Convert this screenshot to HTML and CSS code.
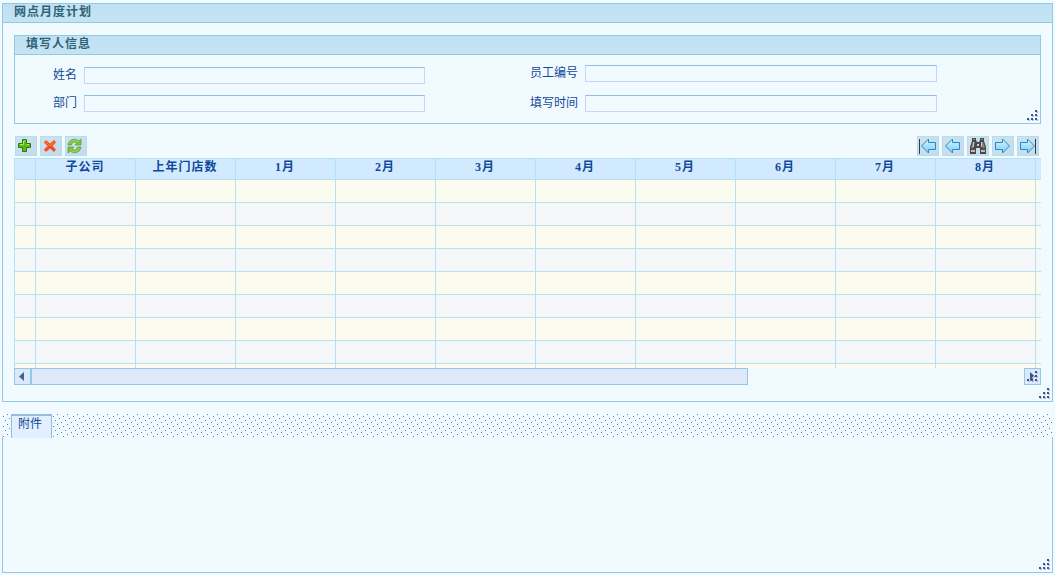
FILE: index.html
```html
<!DOCTYPE html>
<html lang="zh-CN">
<head>
<meta charset="utf-8">
<title>网点月度计划</title>
<link rel="stylesheet" href="styles.css">
</head>
<body>
<svg class="defs" width="0" height="0" aria-hidden="true">
  <defs>
    <linearGradient id="blue" x1="0" y1="0" x2="0" y2="1"><stop offset="0" stop-color="#d4f4ff"/><stop offset="1" stop-color="#7fcdf5"/></linearGradient>
    <symbol id="grip" viewBox="0 0 12 12">
      <path fill="#a9c0ee" d="M9 1h2v2H9zM5 5h2v2H5zM9 5h2v2H9zM1 9h2v2H1zM5 9h2v2H5zM9 9h2v2H9z"/>
      <path fill="#3f5482" d="M8 0h2v2H8zM4 4h2v2H4zM8 4h2v2H8zM0 8h2v2H0zM4 8h2v2H4zM8 8h2v2H8z"/>
    </symbol>
    <symbol id="arrow" viewBox="0 0 16 16"><path d="M.5 8 7.500 1v3.500h7v7h-7V15z" fill="url(#blue)" stroke="#2889c9"/></symbol>
    <pattern id="dots" width="10" height="10" patternUnits="userSpaceOnUse">
      <rect width="10" height="10" fill="#f1fbff"/>
      <path fill="#dff9ff" d="M0 0h1v1H0zM6 2h1v1H6zM2 4h1v1H2zM8 6h1v1H8zM4 8h1v1H4z"/>
      <path fill="#6672c8" d="M5 0h1v1H5zM1 2h1v1H1zM7 4h1v1H7zM3 6h1v1H3zM9 8h1v1H9z"/>
    </pattern>
  </defs>
</svg>
<main class="panel plan">
  <h1 class="title">网点月度计划</h1>
  <section class="panel info">
    <h2 class="title">填写人信息</h2>
    <div class="form">
      <div class="column left">
        <label class="field"><span>姓名</span><input type="text"></label>
        <label class="field"><span>部门</span><input type="text"></label>
      </div>
      <div class="column right">
        <label class="field"><span>员工编号</span><input type="text"></label>
        <label class="field"><span>填写时间</span><input type="text"></label>
      </div>
    </div>
    <svg class="grip"><use href="#grip"/></svg>
  </section>
  <div class="toolbar">
    <button class="tool"><svg viewBox="0 0 16 16"><path d="M5.500 1.500h4v4h4v4h-4v4h-4v-4h-4v-4h4z" fill="#62b51c" stroke="#2c7d07"/><path d="M6.500 3v3.500H3M7 3h1.500M9.500 6.500H12" fill="none" stroke="#b5e86a"/></svg></button>
    <button class="tool"><svg viewBox="0 0 16 16"><path d="M4 2 8 5.500 12 2 14 4.500 10.500 8 14 11.500 12 14 8 10.500 4 14 2 11.500 5.500 8 2 4.500z" fill="#ef4a1c" stroke="#e8a088" stroke-width=".7"/><path d="m4 4 4 4 4-4" fill="none" stroke="#ff8945"/></svg></button>
    <button class="tool"><svg viewBox="0 0 16 16"><g id="turn"><path d="M1 7C1.500 3 5 .7 8.500 1.400c1.400.3 2.300.9 3.100 1.600L14 1v6H8l2-2C7.500 3 5 4.200 4.500 7z" fill="#7fc23e" stroke="#569f2a" stroke-width=".7"/><path d="M3 5.500C4.500 2.500 8 1.500 11 4" fill="none" stroke="#a6df5d"/></g><use href="#turn" transform="rotate(180 7.5 8)"/></svg></button>
    <span class="spacer"></span>
    <button class="tool"><svg viewBox="0 0 18 16"><path d="M.5 1v15" stroke="#3c3c3c"/><use href="#arrow" width="16" height="16" x="2"/></svg></button>
    <button class="tool"><svg viewBox="0 0 18 16"><use href="#arrow" width="16" height="16" x="1"/></svg></button>
    <button class="tool"><svg viewBox="0 0 18 16"><path d="M3 0h4v2l1 2h2l1-2V0h4v3l2 6v7h-6v-6H7v6H1V9l2-6z" fill="#48484a"/><path d="M4 1h2v1H4zM12 1h2v1h-2zM4 4h2L4 10H2zM12 4h2l2 6h-2z" fill="#8a8a8c"/><path d="M4 4h1v5H4zM12 4h1v5h-1zM8 6h2v2H8z" fill="#d3c9c7"/><path d="M2 12h4v2H2zM12 12h4v2h-4z" fill="#c8b8b4"/><path d="M2 11h4M12 11h4" stroke="#704d48"/></svg></button>
    <button class="tool"><svg viewBox="0 0 18 16"><g transform="translate(17 0) scale(-1 1)"><use href="#arrow" width="16" height="16" x="1"/></g></svg></button>
    <button class="tool"><svg viewBox="0 0 18 16"><g transform="translate(17 0) scale(-1 1)"><use href="#arrow" width="16" height="16" x="1"/></g><path d="M16.500 1v15" stroke="#3c3c3c"/></svg></button>
  </div>
  <div class="sheet">
    <div class="row head"><i></i><b>子公司</b><b>上年门店数</b><b>1月</b><b>2月</b><b>3月</b><b>4月</b><b>5月</b><b>6月</b><b>7月</b><b>8月</b><i></i></div>
    <div class="row"><i></i><b></b><b></b><b></b><b></b><b></b><b></b><b></b><b></b><b></b><b></b><i></i></div>
    <div class="row"><i></i><b></b><b></b><b></b><b></b><b></b><b></b><b></b><b></b><b></b><b></b><i></i></div>
    <div class="row"><i></i><b></b><b></b><b></b><b></b><b></b><b></b><b></b><b></b><b></b><b></b><i></i></div>
    <div class="row"><i></i><b></b><b></b><b></b><b></b><b></b><b></b><b></b><b></b><b></b><b></b><i></i></div>
    <div class="row"><i></i><b></b><b></b><b></b><b></b><b></b><b></b><b></b><b></b><b></b><b></b><i></i></div>
    <div class="row"><i></i><b></b><b></b><b></b><b></b><b></b><b></b><b></b><b></b><b></b><b></b><i></i></div>
    <div class="row"><i></i><b></b><b></b><b></b><b></b><b></b><b></b><b></b><b></b><b></b><b></b><i></i></div>
    <div class="row"><i></i><b></b><b></b><b></b><b></b><b></b><b></b><b></b><b></b><b></b><b></b><i></i></div>
    <div class="row"><i></i><b></b><b></b><b></b><b></b><b></b><b></b><b></b><b></b><b></b><b></b><i></i></div>
  </div>
  <div class="scrollbar">
    <span class="step"><svg viewBox="0 0 15 15"><path d="M4 7.500 9 3v9z" fill="#3f6298"/></svg></span>
    <span class="thumb"></span>
    <span class="spacer"></span>
    <span class="step end"><svg viewBox="0 0 15 15"><path d="M5 3v9l5-4.500z" fill="#3f5482"/></svg><svg class="grip"><use href="#grip"/></svg></span>
  </div>
  <svg class="grip"><use href="#grip"/></svg>
</main>
<section class="attachments">
  <div class="tabs"><svg class="dots" shape-rendering="crispEdges"><rect width="100%" height="100%" fill="url(#dots)"/></svg><span class="tab">附件</span></div>
  <div class="attachment-body"><svg class="grip"><use href="#grip"/></svg></div>
</section>
</body>
</html>
```
FILE: styles.css
```css
* { box-sizing: border-box; }
body {
  margin: 0;
  padding: 3px 2px 0;
  width: 1055px;
  height: 575px;
  overflow: hidden;
  background: #f1faff;
  color: #11499a;
  font: 12px/14px "Liberation Serif", "Noto Sans CJK SC", sans-serif;
}
.defs { display: block; height: 0; }
.panel { position: relative; border: 1px solid #94c8e7; }
.plan { width: 1051px; height: 399px; padding: 0 11px; }
.title {
  height: 19px;
  margin: 0;
  padding-left: 11px;
  border-bottom: 1px solid #94c8e7;
  background: linear-gradient(#bfe1f1, #c4e4f4);
  color: #2f6274;
  font-size: 12px;
  line-height: 17px;
  letter-spacing: 1px;
}
.plan > .title { margin: 0 -11px; }
.info { height: 89px; margin-top: 12px; }
.form { display: flex; }
.column { display: flex; flex-direction: column; }
.left { width: 501px; padding: 12px 0 0 38px; gap: 11px; }
.right { padding: 10px 0 0 14px; gap: 13px; }
.field { display: flex; height: 17px; }
.field span { width: 31px; line-height: 16px; white-space: nowrap; }
.right .field span { width: 55px; }
.field input {
  width: 341px;
  height: 17px;
  margin: 0;
  padding: 0 2px;
  border: 1px solid #c9d5f8;
  border-top-color: #94bdea;
  background: #f1faff;
}
.right .field input { width: 352px; }
.grip { position: absolute; right: 1px; bottom: 1px; width: 12px; height: 12px; }
.toolbar { display: flex; gap: 3px; height: 34px; padding: 12px 2px 2px 1px; }
.spacer { flex: 1; }
.tool {
  display: flex;
  width: 22px;
  height: 20px;
  padding: 1px;
  border: 1px solid #b9dceb;
  background: linear-gradient(135deg, #cce2f0, #c3dceb);
}
.tool svg { width: 18px; height: 16px; }
.tool:nth-child(-n+3) svg { width: 16px; }
.sheet {
  width: 1027px;
  height: 210px;
  overflow: hidden;
  border-top: 1px solid #b5e2f0;
  border-left: 1px solid #b5e2f0;
}
.row {
  display: grid;
  grid-template-columns: 21px repeat(10, 100px) 5px;
  height: 23px;
  border-bottom: 1px solid #b5e2f0;
  background: #fbfbef;
}
.row:nth-child(odd) { background: #f4f6f8; }
.row.head { height: 21px; background: #d2eaff; }
.row > :not(:last-child) { border-right: 1px solid #b5e2f0; }
.row b { padding-right: 1px; text-align: center; line-height: 17px; letter-spacing: 1px; }
.scrollbar { display: flex; height: 17px; }
.step, .thumb { border: 1px solid #94c8e7; background: #dde9f9; }
.step { width: 17px; }
.step svg { display: block; width: 15px; height: 15px; }
.thumb { width: 717px; }
.end { position: relative; }
.step .grip { position: absolute; right: 1px; bottom: 1px; width: 12px; height: 12px; }
.attachments { width: 1051px; margin-top: 12px; }
.tabs { position: relative; z-index: 1; height: 23px; padding-left: 9px; }
.dots { position: absolute; left: 0; top: 0; width: 1051px; height: 23px; }
.tab {
  position: relative;
  display: block;
  width: 41px;
  height: 24px;
  padding-left: 6px;
  border: 1px solid #94bde4;
  border-top-width: 2px;
  border-bottom: 0;
  background: #e1efff;
  line-height: 16px;
}
.attachment-body { position: relative; height: 136px; border: 1px solid #94c8e7; border-top: 0; }
```
